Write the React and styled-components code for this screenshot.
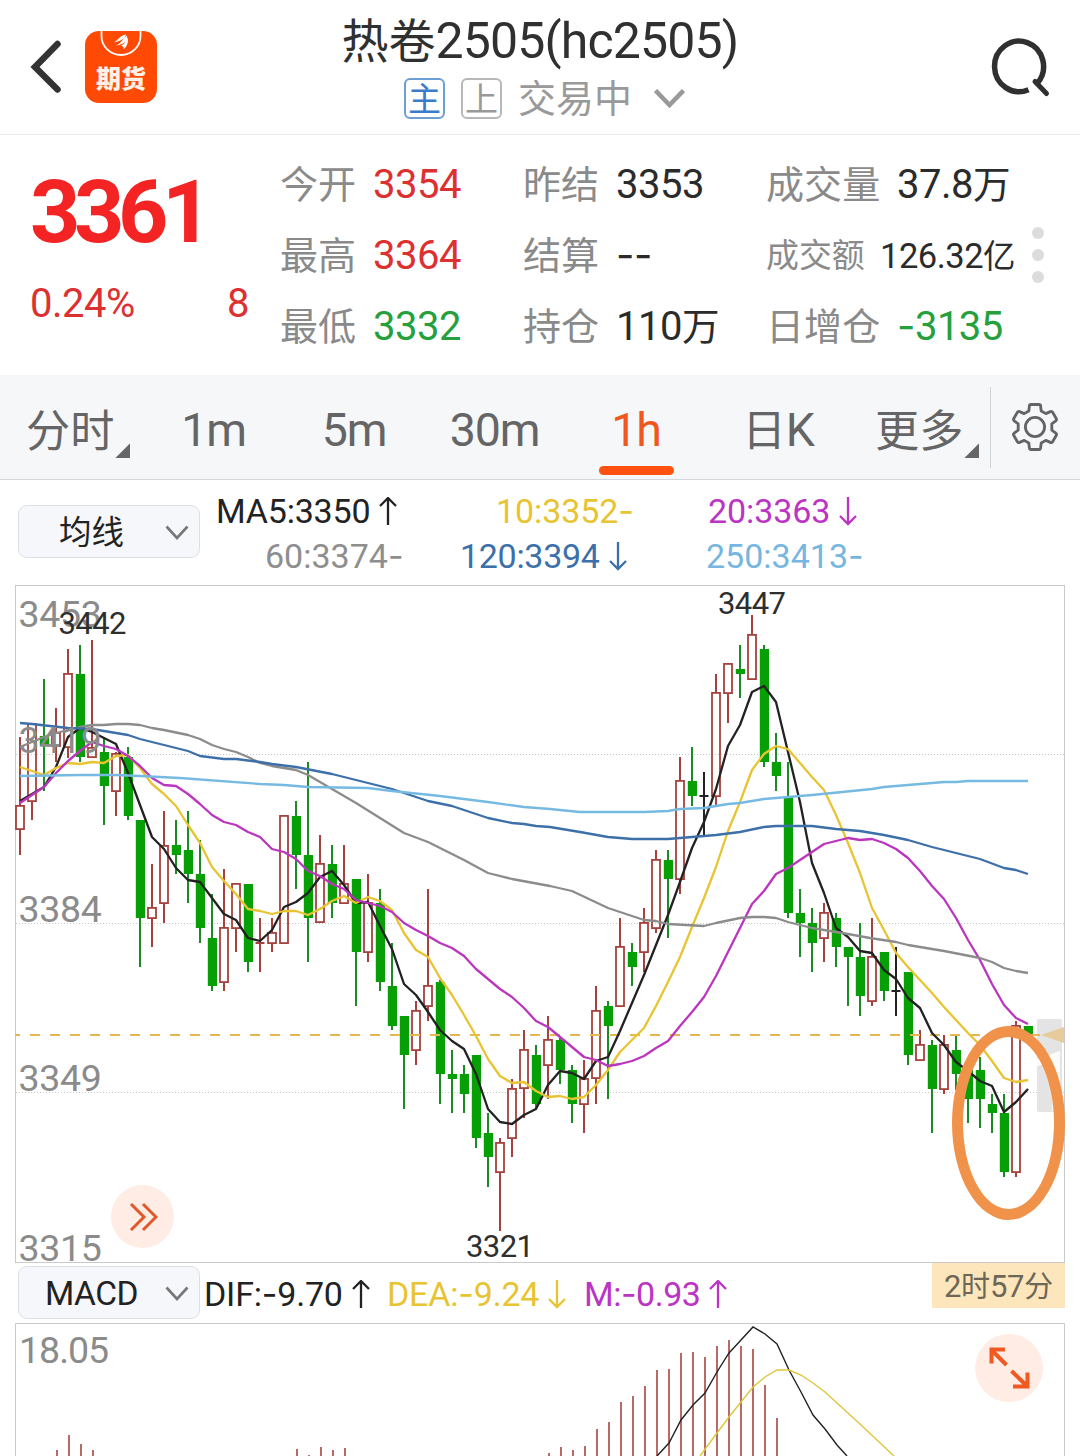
import React from "react";
import styled, { createGlobalStyle } from "styled-components";

const GlobalStyle = createGlobalStyle`
  * { box-sizing: border-box; }
  html, body { margin: 0; background: #fff; }
  body {
    font-family: Roboto, "Noto Sans CJK SC", sans-serif;
    color: #2b2b2b;
    -webkit-font-smoothing: antialiased;
  }
`;

const Screen = styled.main`
  position: relative;
  width: 1080px;
  height: 1456px;
  overflow: hidden;
  display: flex;
  flex-direction: column;
  background: #fff;
`;

/* ---------- text ---------- */

const Label = styled.span`
  display: block;
  font-size: ${(p) => p.$size}px;
  line-height: ${(p) => p.$line ?? p.$size * 1.2}px;
  letter-spacing: ${(p) => p.$track ?? -0.5}px;
  font-weight: ${(p) => p.$weight ?? 400};
  color: ${(p) => p.$color ?? "#2b2b2b"};
  white-space: nowrap;
`;

const Han = styled.span`
  font-family: "Noto Sans CJK SC", sans-serif;
  font-size: 0.94em;
  line-height: 1;
  letter-spacing: 0;
`;

const Dash = styled.span`
  font-family: Inter, sans-serif;
  line-height: 1;
`;

function Text({ children, ...rest }) {
  const parts = String(children).split(/([\u4e00-\u9fff]+|-)/).filter(Boolean);
  return (
    <Label {...rest}>
      {parts.map((part, i) => {
        if (part === "-") return <Dash key={i}>-</Dash>;
        if (/[\u4e00-\u9fff]/.test(part)) return <Han key={i}>{part}</Han>;
        return part;
      })}
    </Label>
  );
}

/* ---------- header ---------- */

const Header = styled.header`
  height: 135px;
  flex: none;
  display: grid;
  grid-template-columns: 300px 480px 300px;
  border-bottom: 1px solid #ebebeb;
`;

const HeaderLeft = styled.div`
  display: flex;
  align-items: center;
  gap: 22px;
  padding-left: 29px;
`;

const HeaderCenter = styled.div`
  display: flex;
  flex-direction: column;
  align-items: center;
  padding-top: 10px;
`;

const HeaderRight = styled.div`
  display: flex;
  align-items: center;
  justify-content: flex-end;
  padding-right: 28px;
`;

const Logo = styled.div`
  width: 72px;
  height: 72px;
  border-radius: 14px;
  background: #ff4a05;
  display: flex;
  flex-direction: column;
  align-items: center;
  overflow: hidden;
`;

const LogoText = styled.span`
  margin-top: -2px;
  font: 900 25px/36px "Noto Sans CJK SC", sans-serif;
  color: #fff0e8;
`;

const StatusRow = styled.div`
  display: flex;
  align-items: center;
  height: 42px;
  margin-top: 4px;
  padding-left: 9px;
`;

const Tag = styled.span`
  width: 41px;
  height: 41px;
  margin-right: 16px;
  border: 2px solid ${(p) => p.$border};
  border-radius: 6px;
  color: ${(p) => p.$color};
  font: 400 33px/34px "Noto Sans CJK SC", sans-serif;
  text-align: center;
`;

const ChevronSlot = styled.span`
  display: flex;
  margin-left: 22px;
`;

/* ---------- quote ---------- */

const Quote = styled.section`
  height: 240px;
  flex: none;
  display: grid;
  grid-template-columns: 280px 243px 243px 258px 1fr;
`;

const PriceColumn = styled.div`
  padding: 25px 31px 0 30px;
`;

const ChangeRow = styled.div`
  display: flex;
  justify-content: space-between;
`;

const StatColumn = styled.div`
  display: flex;
  flex-direction: column;
  padding-top: 14px;
`;

const Stat = styled.div`
  height: 71px;
  display: grid;
  grid-template-columns: ${(p) => p.$label}px auto;
  justify-content: start;
  align-items: center;
`;

const Dots = styled.div`
  display: flex;
  flex-direction: column;
  align-items: center;
  gap: 10px;
  padding: 92px 28px 0 0;
`;

const Dot = styled.i`
  width: 12px;
  height: 12px;
  border-radius: 50%;
  background: #dcdcdc;
`;

/* ---------- period tabs ---------- */

const Tabs = styled.nav`
  height: 105px;
  flex: none;
  display: grid;
  grid-template-columns: 143px 141px 140px 141px 142px 142px 142px 89px;
  background: #f6f7f9;
  border-bottom: 1px solid #d3d6da;
`;

const Tab = styled.button`
  border: 0;
  background: none;
  padding: ${(p) => (p.$menu ? "8px 0 0 26px" : "8px 0 0")};
  font-family: inherit;
  display: flex;
  justify-content: ${(p) => (p.$menu ? "flex-start" : "center")};
  align-items: center;
  position: relative;
  &::after {
    content: "";
    display: ${(p) => (p.$active ? "block" : "none")};
    position: absolute;
    left: 34px;
    bottom: 4px;
    width: 75px;
    height: 9px;
    border-radius: 5px;
    background: #ff5210;
  }
`;

const Corner = styled.i`
  align-self: flex-end;
  width: 15px;
  height: 15px;
  margin: 0 0 21px 1px;
  background: #666;
  clip-path: polygon(100% 0, 100% 100%, 0 100%);
`;

const SettingsSlot = styled.div`
  height: 81px;
  margin: 12px 0 0 -1px;
  border-left: 1px solid #d0d3d7;
  display: flex;
  align-items: center;
  justify-content: center;
  padding: 0 2px 2px 0;
`;

/* ---------- indicators ---------- */

const IndicatorBar = styled.section`
  height: ${(p) => p.$height}px;
  flex: none;
  display: flex;
  align-items: flex-start;
  padding-left: 18px;
`;

const Select = styled.button`
  width: 182px;
  height: 53px;
  flex: none;
  margin-top: ${(p) => p.$top}px;
  padding: 2px 10px 0 ${(p) => p.$inset}px;
  display: flex;
  align-items: center;
  justify-content: space-between;
  border: 1.5px solid #dcdfe4;
  border-radius: 9px;
  background: #f6f7fa;
  font-family: inherit;
`;

const Averages = styled.div`
  padding-top: 9px;
  margin-left: 16px;
`;

const AverageRow = styled.div`
  height: 45px;
  display: grid;
  grid-template-columns: ${(p) => p.$cols};
  padding-left: ${(p) => p.$indent}px;
`;

const Reading = styled.div`
  display: flex;
  align-items: center;
  gap: 9px;
`;

const MacdReadings = styled.div`
  display: grid;
  grid-template-columns: 183px 197px 160px;
  height: 45px;
  margin: 9px 0 0 4px;
`;

const Countdown = styled.div`
  margin-left: auto;
  margin-right: 15px;
  width: 133px;
  height: 45px;
  padding-top: 2px;
  display: flex;
  align-items: center;
  justify-content: center;
  background: #fde6bc;
`;

/* ---------- charts ---------- */

const Panel = styled.section`
  position: relative;
  width: 1050px;
  height: ${(p) => p.$height}px;
  flex: none;
  margin-left: 15px;
`;

const Plot = styled.svg`
  display: block;
  font-family: Roboto, sans-serif;
`;

const RoundButton = styled.button`
  position: absolute;
  left: ${(p) => p.$left}px;
  top: ${(p) => p.$top}px;
  width: ${(p) => p.$size}px;
  height: ${(p) => p.$size}px;
  padding: 0;
  border: 0;
  border-radius: 50%;
  background: #feece5;
  display: flex;
  align-items: center;
  justify-content: center;
`;

const Highlight = styled.div`
  position: absolute;
  left: 937px;
  top: 441px;
  width: 113px;
  height: 194px;
  border: 11.5px solid #f1924a;
  border-radius: 50%;
`;

/* [kind, high, open/close top, open/close bottom, low], one entry every 12 units */
const CANDLES = [
  ["u", 737, 805, 830, 855], ["u", 723, 723, 802, 820], ["d", 679, 736, 746, 791],
  ["u", 708, 732, 747, 762], ["u", 649, 673, 748, 758], ["d", 645, 674, 757, 762],
  ["u", 640, 747, 758, 758], ["d", 738, 752, 786, 825], ["u", 752, 753, 792, 816],
  ["d", 747, 757, 816, 820], ["d", 820, 820, 918, 967], ["u", 864, 907, 919, 947],
  ["u", 811, 845, 904, 923], ["d", 820, 845, 855, 874], ["d", 811, 850, 874, 903],
  ["d", 840, 874, 928, 943], ["d", 894, 938, 986, 991], ["u", 869, 927, 983, 991],
  ["u", 883, 883, 929, 952], ["d", 884, 884, 962, 972], ["u", 918, 943, 943, 972],
  ["u", 918, 932, 944, 952], ["u", 815, 815, 944, 944], ["d", 801, 816, 855, 889],
  ["d", 762, 855, 918, 962], ["u", 835, 863, 923, 923], ["d", 845, 864, 903, 918],
  ["u", 845, 883, 904, 904], ["d", 879, 879, 952, 1006], ["u", 874, 902, 953, 962],
  ["d", 889, 903, 982, 991], ["d", 943, 986, 1026, 1030], ["d", 1016, 1016, 1055, 1109],
  ["u", 1001, 1010, 1051, 1065], ["u", 889, 985, 1007, 1021], ["d", 980, 982, 1074, 1104],
  ["d", 1050, 1074, 1079, 1113], ["d", 1065, 1074, 1094, 1113], ["d", 1055, 1055, 1138, 1148],
  ["d", 1113, 1133, 1157, 1187], ["u", 1138, 1142, 1173, 1231], ["u", 1079, 1088, 1139, 1157],
  ["u", 1030, 1049, 1089, 1118], ["d", 1045, 1055, 1104, 1109], ["u", 1016, 1039, 1066, 1099],
  ["d", 1036, 1040, 1070, 1084], ["d", 1065, 1070, 1104, 1123], ["u", 1060, 1078, 1105, 1133],
  ["u", 986, 1010, 1079, 1104], ["d", 1001, 1006, 1026, 1099], ["u", 918, 946, 1007, 1007],
  ["d", 943, 952, 967, 986], ["u", 908, 922, 953, 972], ["u", 850, 859, 929, 933],
  ["d", 850, 860, 879, 938], ["u", 757, 780, 880, 894], ["d", 747, 781, 796, 806],
  ["f", 772, 796, 796, 836], ["u", 674, 692, 797, 805], ["u", 663, 663, 694, 723],
  ["d", 645, 669, 674, 698], ["u", 615, 634, 680, 680], ["d", 645, 649, 762, 767],
  ["d", 733, 762, 776, 791], ["d", 762, 796, 913, 918], ["d", 889, 913, 923, 957],
  ["d", 908, 923, 943, 972], ["u", 903, 912, 939, 962], ["d", 913, 918, 947, 967],
  ["d", 947, 947, 957, 1006], ["d", 923, 957, 996, 1016], ["u", 918, 956, 1002, 1006],
  ["d", 952, 952, 991, 1001], ["f", 947, 991, 991, 1016], ["d", 972, 972, 1055, 1065],
  ["u", 1030, 1044, 1061, 1061], ["d", 1040, 1045, 1089, 1133], ["u", 1035, 1044, 1090, 1094],
  ["d", 1036, 1050, 1074, 1090], ["d", 1070, 1070, 1099, 1123], ["d", 1057, 1070, 1099, 1128],
  ["d", 1094, 1104, 1113, 1133], ["d", 1094, 1113, 1172, 1177], ["u", 1021, 1025, 1173, 1177],
  ["d", 1026, 1026, 1035, 1035],
];

const MA5 = [
  801, 794, 787, 767, 737, 728, 732, 738, 744, 773, 805, 837, 849, 868, 880, 882, 898, 914, 920,
  938, 941, 930, 907, 902, 893, 877, 871, 885, 903, 902, 926, 949, 984, 995, 1012, 1030, 1041,
  1049, 1074, 1109, 1122, 1124, 1115, 1109, 1085, 1071, 1073, 1079, 1061, 1057, 1031, 1003, 975,
  945, 915, 882, 848, 822, 789, 746, 725, 692, 686, 702, 752, 802, 863, 893, 928, 937, 951, 953,
  970, 979, 998, 1008, 1033, 1045, 1062, 1071, 1081, 1086, 1112, 1102, 1089,
];

const MA10 = [
  767, 771, 775, 768, 763, 764, 762, 763, 756, 755, 768, 784, 794, 806, 825, 843, 867, 881, 894,
  909, 911, 914, 911, 911, 915, 909, 901, 896, 903, 897, 901, 910, 933, 950, 957, 978, 995, 1015,
  1036, 1059, 1076, 1083, 1082, 1091, 1097, 1096, 1099, 1097, 1085, 1070, 1052, 1040, 1028, 1006,
  982, 957, 927, 898, 867, 831, 802, 770, 754, 746, 749, 763, 777, 790, 815, 843, 873, 908, 930,
  953, 967, 980, 993, 1007, 1020, 1033, 1045, 1061, 1078, 1082, 1080,
];

const MA20 = [
  803, 795, 787, 773, 761, 751, 742, 746, 749, 756, 766, 778, 785, 786, 794, 804, 815, 822, 825,
  832, 837, 849, 852, 859, 871, 876, 884, 889, 900, 903, 906, 912, 923, 930, 936, 943, 948, 956,
  969, 979, 989, 997, 1008, 1021, 1027, 1037, 1047, 1057, 1060, 1066, 1064, 1061, 1056, 1048,
  1041, 1026, 1012, 997, 976, 952, 928, 904, 891, 874, 868, 860, 852, 844, 841, 838, 840, 839,
  843, 849, 858, 871, 886, 899, 918, 940, 960, 984, 1005, 1018, 1024,
];

const MA60 =
  "20,747 32,742 44,737 56,733 68,730 80,727 92,725 104,725 116,724 128,724 140,725 152,728 164,730 188,735 200,739 212,745 224,749 236,752 248,757 260,763 272,766 296,770 308,775 332,789 356,803 380,818 404,833 428,842 464,860 488,873 512,879 550,886 572,891 608,908 620,912 644,920 656,921 668,924 704,926 716,923 740,918 752,917 764,917 776,918 788,922 812,928 848,934 870,938 896,942 908,945 944,951 980,958 992,962 1004,968 1016,971 1028,973";
const MA120 =
  "20,723 32,724 68,728 92,729 104,731 128,735 140,739 164,745 188,751 200,756 224,759 236,759 260,762 272,764 296,767 332,774 356,780 392,789 416,797 428,801 452,806 488,818 512,823 524,824 536,826 550,827 580,832 608,837 632,839 668,839 716,835 740,832 764,827 776,826 812,826 836,829 860,831 884,835 908,840 932,847 956,853 980,859 1004,868 1016,870 1028,874";
const MA250 =
  "20,776 80,775 116,775 140,776 180,778 260,784 284,785 308,787 368,788 392,791 440,796 488,802 524,807 550,809 580,812 644,812 668,811 680,809 704,808 728,804 740,803 764,799 812,795 872,789 884,787 944,782 956,782 968,781 1028,781";

const series = (values) => values.map((y, i) => `${20 + i * 12},${y}`).join(" ");

const LINES = [
  [series(MA5), "#222222"],
  [series(MA10), "#e8c432"],
  [series(MA20), "#bb35bf"],
  [MA60, "#8c8c8c"],
  [MA120, "#3d6fa8"],
  [MA250, "#76b9e2"],
];

const SCALE = [["3453", 627], ["3419", 753], ["3384", 922], ["3349", 1091], ["3315", 1261]];

const HISTOGRAM = [
  [57, 1450], [69, 1435], [81, 1444], [93, 1450], [297, 1449], [309, 1455], [321, 1447],
  [333, 1450], [345, 1448], [549, 1453], [561, 1447], [573, 1450], [585, 1446], [597, 1429],
  [609, 1422], [621, 1402], [633, 1396], [645, 1386], [657, 1370], [669, 1369], [681, 1353],
  [693, 1352], [705, 1357], [717, 1346], [729, 1340], [741, 1346], [753, 1349], [765, 1385],
  [777, 1418],
];
const DIF =
  "657,1456 669,1443 681,1420 693,1405 705,1393 717,1372 729,1353 741,1340 753,1327 765,1334 777,1344 789,1370 801,1392 813,1415 825,1429 837,1445 847,1456";
const DEA =
  "700,1456 717,1433 729,1417 741,1402 753,1387 765,1377 777,1370 789,1370 801,1375 813,1383 825,1392 837,1403 860,1424 894,1456";

function Candle({ x, data: [kind, high, top, bottom, low] }) {
  if (kind === "d") {
    return (
      <g>
        <path d={`M${x} ${high}V${low}`} stroke="#1c8a26" strokeWidth="2" />
        <rect x={x - 4.2} y={top} width="9.2" height={bottom - top} fill="#06a006" />
      </g>
    );
  }
  const color = kind === "f" ? "#222" : "#a5423e";
  if (top === bottom) {
    return <path d={`M${x} ${high}V${low}M${x - 4.5} ${top}h9`} stroke={color} strokeWidth="2" />;
  }
  return (
    <g stroke={color} fill="none">
      <path d={`M${x} ${high}V${top}M${x} ${bottom}V${low}`} strokeWidth="2" />
      <rect x={x - 4} y={top + 0.9} width="8" height={bottom - top - 1.8} strokeWidth="1.8" />
    </g>
  );
}

function PriceChart() {
  return (
    <Plot width="1050" height="678" viewBox="15 585 1050 678">
      <rect x="15.5" y="585.5" width="1049" height="677" fill="#fff" stroke="#c9c9c9" />
      {[754.5, 923.5, 1092.5].map((y) => (
        <path key={y} d={`M16 ${y}H1064`} stroke="#c6c6c6" strokeDasharray="1 2" />
      ))}
      <rect x="1037" y="1019" width="25" height="93" rx="2" fill="#e4e4e4" />
      <text x="1030" y="1111" fontSize="84" fill="#fcfcfc">1</text>
      {CANDLES.map((c, i) => (
        <Candle key={i} x={20 + i * 12} data={c} />
      ))}
      <path d="M10 1035H1040" stroke="#e8b650" strokeWidth="2" strokeDasharray="10 10" />
      <path d="M1041 1035l23-8v16z" fill="#e6cb9c" />
      {LINES.map(([points, color]) => (
        <polyline key={color} points={points} fill="none" stroke={color} strokeWidth="2.3" strokeLinejoin="round" />
      ))}
      {SCALE.map(([value, y]) => (
        <text key={value} x="18.5" y={y} fontSize="37.5" letterSpacing="-0.3" fill="#8b8b8b">{value}</text>
      ))}
      <g fontSize="31" letterSpacing="-0.6" fill="#2e2e2e">
        <text x="58.5" y="634">3442</text>
        <text x="718" y="614">3447</text>
        <text x="466" y="1257">3321</text>
      </g>
    </Plot>
  );
}

function MacdChart() {
  return (
    <Plot width="1050" height="133" viewBox="15 1323 1050 133">
      <path d="M15.5 1460V1323.5H1064.5V1460" fill="none" stroke="#c9c9c9" />
      {HISTOGRAM.map(([x, y]) => (
        <path key={x} d={`M${x} ${y}V1460`} stroke="#b86b66" strokeWidth="2" />
      ))}
      <polyline points={DIF} fill="none" stroke="#222" strokeWidth="1.4" />
      <polyline points={DEA} fill="none" stroke="#e0c53c" strokeWidth="1.4" />
      <text x="19" y="1363" fontSize="37.5" letterSpacing="-1" fill="#8b8b8b">18.05</text>
    </Plot>
  );
}

/* ---------- icons ---------- */

function Arrow({ down, color }) {
  return (
    <svg width="18" height="30" viewBox="0 0 18 30" fill="none" stroke={color} strokeWidth="2.3">
      <path d={down ? "M9 0V27M1 19l8 8 8-8" : "M9 28V1M1 9l8-8 8 8"} />
    </svg>
  );
}

function Chevron({ width, height, stroke, color }) {
  return (
    <svg width={width} height={height} viewBox={`0 0 ${width} ${height}`} fill="none" stroke={color} strokeWidth={stroke}>
      <path d={`M1.5 1.5L${width / 2} ${height - 3}L${width - 1.5} 1.5`} />
    </svg>
  );
}

function Gear() {
  return (
    <svg width="48" height="50" viewBox="0 0 48 50" fill="none" stroke="#646464" strokeWidth="2.8" strokeLinejoin="round">
      <path d="M20 2.5h8q1.5 0 1.6 1.5l.6 5 4.6 2.6 4.6-2q1.4-.6 2.2.7l3.6 6.2q.8 1.4-.4 2.3l-4 3v6.4l4 3q1.2.9.4 2.3l-3.6 6.2q-.8 1.3-2.2.7l-4.6-2-4.6 2.6-.6 5q-.1 1.5-1.6 1.5h-8q-1.5 0-1.6-1.5l-.6-5-4.6-2.6-4.6 2q-1.4.6-2.2-.7l-3.6-6.2q-.8-1.4.4-2.3l4-3v-6.4l-4-3q-1.2-.9-.4-2.3l3.6-6.2q.8-1.3 2.2-.7l4.6 2 4.6-2.6.6-5q.1-1.5 1.6-1.5z" />
      <circle cx="24" cy="25" r="9.6" />
    </svg>
  );
}

/* ---------- data ---------- */

const RED = "#dd3030";
const GREEN = "#25a03c";
const DARK = "#2b2b2b";

const STATS = [
  { label: 93, items: [["今开", "3354", RED], ["最高", "3364", RED], ["最低", "3332", GREEN]] },
  { label: 93, items: [["昨结", "3353", DARK], ["结算", "--", DARK], ["持仓", "110万", DARK]] },
  { label: 131, items: [["成交量", "37.8万", DARK], ["成交额", "126.32亿", DARK, true], ["日增仓", "-3135", GREEN]] },
];

const TABS = ["1m", "5m", "30m", "1h", "日K"];

export default function App() {
  return (
    <Screen>
      <GlobalStyle />
      <Header>
        <HeaderLeft>
          <svg width="34" height="56" viewBox="29 39 34 56" fill="none" stroke="#333" strokeWidth="6.5" strokeLinecap="round">
            <path d="M57.5 44L35 67L57.5 89.5" />
          </svg>
          <Logo>
            <svg width="72" height="30" viewBox="0 0 72 30">
              <path d="M16.500 0v5a19.500 19 0 0 0 39 0V0" fill="none" stroke="#fff" strokeWidth="1.8" />
              <path d="M29 11.500C33 9 35 4.500 41 3.500 40 7 37 10 29 11.500zM31 14.500C37 12 37.500 7.500 42 4.500 42.500 9.500 39 13.500 31 14.500zM36 15C40 12.500 40.500 9.500 42.500 6.500 44 11 42 15.500 38.500 18.500 39.500 16 38.500 15 36 15z" fill="#fff" />
            </svg>
            <LogoText>期货</LogoText>
          </Logo>
        </HeaderLeft>
        <HeaderCenter>
          <Text $size={50} $line={63} $track={-0.85} $color="#303030">热卷2505(hc2505)</Text>
          <StatusRow>
            <Tag $border="#6c9fd6" $color="#3a7cc9">主</Tag>
            <Tag $border="#b8b8b8" $color="#999">上</Tag>
            <Text $size={40.4} $line={42} $color="#999">交易中</Text>
            <ChevronSlot><Chevron width={31} height={19} stroke={4.5} color="#999" /></ChevronSlot>
          </StatusRow>
        </HeaderCenter>
        <HeaderRight>
          <svg width="62" height="62" viewBox="990 36 62 62" fill="none" stroke="#303030" strokeWidth="5.5">
            <path d="M1028.500 89.700A24.500 25.300 0 1 1 1037.500 83" />
            <path d="M1035 81.500L1046.500 93.500" strokeLinecap="round" strokeWidth="5" />
          </svg>
        </HeaderRight>
      </Header>

      <Quote>
        <PriceColumn>
          <Text $size={88} $line={104} $track={-6.5} $weight={700} $color="#f52424">3361</Text>
          <ChangeRow>
            <Text $size={40} $line={80} $color={RED}>0.24%</Text>
            <Text $size={40} $line={80} $color={RED}>8</Text>
          </ChangeRow>
        </PriceColumn>
        {STATS.map((column, c) => (
          <StatColumn key={c}>
            {column.items.map(([label, value, color, small]) => (
              <Stat key={label} $label={small ? 114 : column.label}>
                <Text $size={small ? 35 : 40.5} $color="#8a8a8a">{label}</Text>
                <Text $size={small ? 34.5 : 40} $line={small ? 44 : 49} $color={color}>{value}</Text>
              </Stat>
            ))}
          </StatColumn>
        ))}
        <Dots><Dot /><Dot /><Dot /></Dots>
      </Quote>

      <Tabs>
        <Tab $menu>
          <Text $size={47} $color="#656565">分时</Text>
          <Corner />
        </Tab>
        {TABS.map((tab) => (
          <Tab key={tab} $active={tab === "1h"}>
            <Text $size={46.5} $track={-1.2} $color={tab === "1h" ? "#f0561e" : "#656565"}>{tab}</Text>
          </Tab>
        ))}
        <Tab $menu>
          <Text $size={47} $color="#656565">更多</Text>
          <Corner />
        </Tab>
        <SettingsSlot><Gear /></SettingsSlot>
      </Tabs>

      <IndicatorBar $height={105}>
        <Select $top={25} $inset={40}>
          <Text $size={34.5} $color="#222">均线</Text>
          <Chevron width={24} height={16} stroke={2.6} color="#777" />
        </Select>
        <Averages>
          <AverageRow $cols="280px 212px 170px" $indent={0}>
            <Reading><Text $size={34} $track={-0.2} $color="#222">MA5:3350</Text><Arrow color="#222" /></Reading>
            <Reading><Text $size={34} $track={-0.1} $color="#e8c432">10:3352-</Text></Reading>
            <Reading><Text $size={34} $track={-0.1} $color="#bb35c4">20:3363</Text><Arrow down color="#bb35c4" /></Reading>
          </AverageRow>
          <AverageRow $cols="195px 246px 170px" $indent={49}>
            <Reading><Text $size={34} $track={0} $color="#8e8e8e">60:3374-</Text></Reading>
            <Reading><Text $size={34} $track={-0.3} $color="#3c70aa">120:3394</Text><Arrow down color="#3c70aa" /></Reading>
            <Reading><Text $size={34} $track={0} $color="#76b6e0">250:3413-</Text></Reading>
          </AverageRow>
        </Averages>
      </IndicatorBar>

      <Panel $height={678}>
        <PriceChart />
        <RoundButton $left={96} $top={600} $size={63}>
          <svg width="30" height="30" viewBox="0 0 30 30" fill="none" stroke="#e0592a" strokeWidth="3">
            <path d="M3 2l13 13L3 28M15 2l13 13L15 28" />
          </svg>
        </RoundButton>
        <Highlight />
      </Panel>

      <IndicatorBar $height={60}>
        <Select $top={3} $inset={26}>
          <Text $size={33.5} $line={44} $color="#222">MACD</Text>
          <Chevron width={24} height={16} stroke={2.6} color="#777" />
        </Select>
        <MacdReadings>
          <Reading><Text $size={34} $track={-0.2} $color="#222">DIF:-9.70</Text><Arrow color="#222" /></Reading>
          <Reading><Text $size={34} $track={-0.2} $color="#e8c432">DEA:-9.24</Text><Arrow down color="#e8c432" /></Reading>
          <Reading><Text $size={34} $color="#bb35c4">M:-0.93</Text><Arrow color="#bb35c4" /></Reading>
        </MacdReadings>
        <Countdown><Text $size={31} $color="#6c6757">2时57分</Text></Countdown>
      </IndicatorBar>

      <Panel $height={133}>
        <MacdChart />
        <RoundButton $left={960} $top={11} $size={68}>
          <svg width="44" height="44" viewBox="987 1346 44 44" fill="none" stroke="#ee5a22" strokeWidth="4">
            <path d="M1006.500 1365L991.500 1350M1005 1349.500H991.500V1363.500M1011.500 1371L1027 1386M1027.500 1372.500V1386.500H1013" />
          </svg>
        </RoundButton>
      </Panel>
    </Screen>
  );
}
